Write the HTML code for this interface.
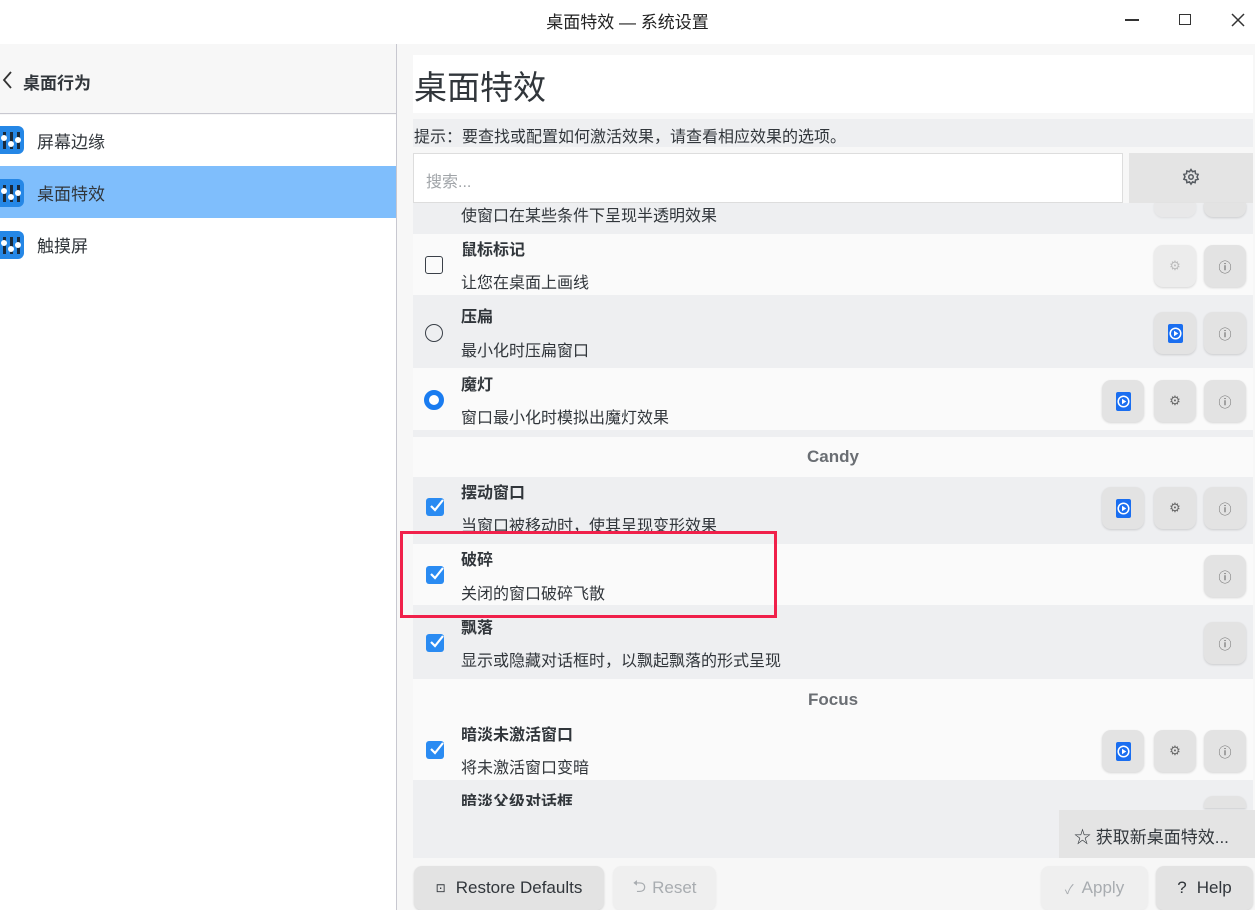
<!DOCTYPE html>
<html><head><meta charset="utf-8"><style>
*{margin:0;padding:0;box-sizing:border-box}
body{width:1255px;height:910px;overflow:hidden;background:#f7f7f7;font-family:"Liberation Sans","Noto Sans CJK SC",sans-serif;color:#31363b;position:relative}
.a{position:absolute}
.t{font-size:16px;font-weight:bold;color:#31363b;margin-top:-3px}
.d{font-size:16px;color:#31363b;margin-top:-3px}
.btn{position:absolute;width:42px;height:42px;border-radius:9px;background:#e3e3e3;box-shadow:0 1px 2px rgba(0,0,0,.15);display:flex;align-items:center;justify-content:center}
.cb{position:absolute;left:426px;width:18px;height:18px;border-radius:3px;background:#2a8bf2}
.hd{position:absolute;left:413px;width:840px;text-align:center;font-size:17px;font-weight:bold;color:#6a6e73}
.bb{position:absolute;top:866px;height:44px;border-radius:8px;font-size:17px;display:flex;align-items:center;justify-content:center;box-shadow:0 1px 2px rgba(0,0,0,.15)}
.pl{width:15px;height:19px;background:#1a6ef0;border-radius:2px;display:flex;align-items:center;justify-content:center}
.ic{position:absolute;left:0;width:24px;height:28px;border-radius:0 6px 6px 0;background:#2587e6}
</style></head><body>
<!-- title bar -->
<div class="a" style="left:0;top:0;width:1255px;height:44px;background:#fff"></div>
<div class="a" style="left:0;top:8px;width:1255px;text-align:center;font-size:17px;color:#222">桌面特效 — 系统设置</div>
<div class="a" style="left:1125px;top:19px;width:14px;height:1.5px;background:#333"></div>
<div class="a" style="left:1179px;top:14px;width:12px;height:11px;border:1.5px solid #333"></div>
<svg class="a" style="left:1231px;top:13px" width="14" height="14"><path d="M1 1L13 13M13 1L1 13" stroke="#333" stroke-width="1.5"/></svg>
<!-- sidebar -->
<div class="a" style="left:0;top:44px;width:396px;height:70px;background:#f7f7f7;border-bottom:1px solid #c8c8d0"></div>
<svg class="a" style="left:2px;top:71px" width="10" height="18"><path d="M9 1L2 9L9 17" stroke="#333" stroke-width="1.8" fill="none"/></svg>
<div class="a t" style="left:23px;top:72px;font-size:17px">桌面行为</div>
<div class="a" style="left:0;top:115px;width:396px;height:795px;background:#fff"></div>
<div class="a" style="left:0;top:166px;width:396px;height:52px;background:#7fbefc"></div>
<div class="a" style="left:396px;top:44px;width:1px;height:866px;background:#c8c8d0"></div>
<svg class="a" style="left:0;top:126px" width="24" height="28"><rect width="24" height="28" rx="6" fill="#2587e6"/><rect x="0" y="0" width="6" height="28" fill="#2587e6"/><rect x="3" y="6" width="3" height="17" fill="#1b2a3a"/><rect x="10" y="6" width="3" height="17" fill="#1b2a3a"/><rect x="17" y="6" width="3" height="17" fill="#1b2a3a"/><circle cx="4" cy="12" r="3" fill="#fff"/><circle cx="11" cy="18" r="3" fill="#fff"/><circle cx="18" cy="14" r="3" fill="#fff"/></svg>
<svg class="a" style="left:0;top:179px" width="24" height="28"><rect width="24" height="28" rx="6" fill="#2587e6"/><rect x="0" y="0" width="6" height="28" fill="#2587e6"/><rect x="3" y="6" width="3" height="17" fill="#1b2a3a"/><rect x="10" y="6" width="3" height="17" fill="#1b2a3a"/><rect x="17" y="6" width="3" height="17" fill="#1b2a3a"/><circle cx="4" cy="12" r="3" fill="#fff"/><circle cx="11" cy="18" r="3" fill="#fff"/><circle cx="18" cy="14" r="3" fill="#fff"/></svg>
<svg class="a" style="left:0;top:231px" width="24" height="28"><rect width="24" height="28" rx="6" fill="#2587e6"/><rect x="0" y="0" width="6" height="28" fill="#2587e6"/><rect x="3" y="6" width="3" height="17" fill="#1b2a3a"/><rect x="10" y="6" width="3" height="17" fill="#1b2a3a"/><rect x="17" y="6" width="3" height="17" fill="#1b2a3a"/><circle cx="4" cy="12" r="3" fill="#fff"/><circle cx="11" cy="18" r="3" fill="#fff"/><circle cx="18" cy="14" r="3" fill="#fff"/></svg>
<div class="a d" style="left:37px;top:131px;font-size:17px">屏幕边缘</div>
<div class="a d" style="left:37px;top:183px;font-size:17px">桌面特效</div>
<div class="a d" style="left:37px;top:235px;font-size:17px">触摸屏</div>
<!-- right -->
<div class="a" style="left:413px;top:55px;width:840px;height:58px;background:#fff"></div>
<div class="a" style="left:414px;top:61px;font-size:33px;color:#31363b">桌面特效</div>
<div class="a" style="left:413px;top:119px;width:840px;height:28px;background:#eeeff1"></div>
<div class="a" style="left:414px;top:123px;font-size:16px">提示：要查找或配置如何激活效果，请查看相应效果的选项。</div>
<div class="a" style="left:413px;top:153px;width:710px;height:50px;background:#fff;border:1px solid #ddd"></div>
<div class="a" style="left:426px;top:168px;font-size:16px;color:#a0a4a8">搜索...</div>
<div class="a" style="left:1129px;top:153px;width:124px;height:50px;background:#e4e4e4"></div>
<svg class="a" style="left:1182px;top:168px" width="18" height="18" viewBox="0 0 24 24"><path d="M12 2l2 3 3.5-1 .5 3.5 3.5 1-1.5 3.5 1.5 3-3.5 1-.5 3.5-3.5-1-2 3-2-3-3.5 1-.5-3.5-3.5-1 1.5-3.5L2.5 8.5 6 7.5 6.5 4 10 5z" fill="none" stroke="#555a60" stroke-width="2"/><circle cx="12" cy="12" r="3" fill="none" stroke="#555a60" stroke-width="2"/></svg>
<!-- list rows -->
<div class="a" style="left:413px;top:203px;width:840px;height:31px;background:#eeeff1"></div>
<div class="a" style="left:413px;top:234px;width:840px;height:61px;background:#fafafa"></div>
<div class="a" style="left:413px;top:295px;width:840px;height:73px;background:#eeeff1"></div>
<div class="a" style="left:413px;top:368px;width:840px;height:62px;background:#fafafa"></div>
<div class="a" style="left:413px;top:430px;width:840px;height:7px;background:#eeeff1"></div>
<div class="a" style="left:413px;top:437px;width:840px;height:40px;background:#fafafa"></div>
<div class="a" style="left:413px;top:477px;width:840px;height:67px;background:#eeeff1"></div>
<div class="a" style="left:413px;top:544px;width:840px;height:61px;background:#fafafa"></div>
<div class="a" style="left:413px;top:605px;width:840px;height:74px;background:#eeeff1"></div>
<div class="a" style="left:413px;top:679px;width:840px;height:101px;background:#fafafa"></div>
<div class="a" style="left:413px;top:780px;width:840px;height:78px;background:#eeeff1"></div>

<div class="btn" style="left:1154px;top:203px;height:14px;border-radius:0 0 9px 9px;opacity:.5"></div><div class="btn" style="left:1204px;top:203px;height:14px;border-radius:0 0 9px 9px"></div>
<div class="a d" style="left:461px;top:205px">使窗口在某些条件下呈现半透明效果</div>

<div class="a" style="left:425px;top:256px;width:18px;height:18px;border:1.6px solid #3a4048;border-radius:3px"></div>
<div class="a t" style="left:461px;top:239px">鼠标标记</div><div class="a d" style="left:461px;top:272px">让您在桌面上画线</div>
<div class="btn" style="left:1154px;top:245px;background:#ececec"><span style="color:#bbb;font-size:13px">⚙</span></div>
<div class="btn" style="left:1204px;top:245px"><span style="color:#555;font-size:13px">ⓘ</span></div>

<div class="a" style="left:425px;top:324px;width:18px;height:18px;border:1.6px solid #3a4048;border-radius:50%"></div>
<div class="a t" style="left:461px;top:306px">压扁</div><div class="a d" style="left:461px;top:340px">最小化时压扁窗口</div>

<div class="a" style="left:424px;top:390px;width:20px;height:20px;border:5px solid #1a7cf0;border-radius:50%;background:#fff"></div>
<div class="a t" style="left:461px;top:374px">魔灯</div><div class="a d" style="left:461px;top:407px">窗口最小化时模拟出魔灯效果</div>

<div class="hd" style="top:447px">Candy</div>
<div class="cb" style="top:498px"></div><div class="a t" style="left:461px;top:482px">摆动窗口</div><div class="a d" style="left:461px;top:515px">当窗口被移动时，使其呈现变形效果</div>
<div class="cb" style="top:566px"></div><div class="a t" style="left:461px;top:549px">破碎</div><div class="a d" style="left:461px;top:583px">关闭的窗口破碎飞散</div>
<div class="cb" style="top:634px"></div><div class="a t" style="left:461px;top:617px">飘落</div><div class="a d" style="left:461px;top:650px">显示或隐藏对话框时，以飘起飘落的形式呈现</div>
<div class="hd" style="top:690px">Focus</div>
<div class="cb" style="top:741px"></div><div class="a t" style="left:461px;top:724px">暗淡未激活窗口</div><div class="a d" style="left:461px;top:757px">将未激活窗口变暗</div>
<div class="a" style="left:413px;top:788px;width:840px;height:18px;overflow:hidden"><div class="a t" style="left:48px;top:3px">暗淡父级对话框</div></div>
<div class="btn" style="left:1204px;top:796px;height:12px;border-radius:9px 9px 0 0"></div>

<!-- checkmarks -->
<svg class="a" style="left:427px;top:496px" width="20" height="20"><path d="M4 10l4 4 8-10" stroke="#fff" stroke-width="2.2" fill="none"/></svg>
<svg class="a" style="left:427px;top:564px" width="20" height="20"><path d="M4 10l4 4 8-10" stroke="#fff" stroke-width="2.2" fill="none"/></svg>
<svg class="a" style="left:427px;top:632px" width="20" height="20"><path d="M4 10l4 4 8-10" stroke="#fff" stroke-width="2.2" fill="none"/></svg>
<svg class="a" style="left:427px;top:739px" width="20" height="20"><path d="M4 10l4 4 8-10" stroke="#fff" stroke-width="2.2" fill="none"/></svg>

<!-- buttons -->
<div class="btn" style="left:1154px;top:312px"><div class="pl"><svg width="13" height="13"><circle cx="6.5" cy="6.5" r="5.3" fill="none" stroke="#fff" stroke-width="1.5"/><path d="M5 3.8L9.3 6.5L5 9.2Z" fill="#fff"/></svg></div></div>
<div class="btn" style="left:1204px;top:312px"><span style="color:#555;font-size:13px">ⓘ</span></div>
<div class="btn" style="left:1102px;top:380px"><div class="pl"><svg width="13" height="13"><circle cx="6.5" cy="6.5" r="5.3" fill="none" stroke="#fff" stroke-width="1.5"/><path d="M5 3.8L9.3 6.5L5 9.2Z" fill="#fff"/></svg></div></div>
<div class="btn" style="left:1154px;top:380px"><span style="color:#666;font-size:13px">⚙</span></div>
<div class="btn" style="left:1204px;top:380px"><span style="color:#555;font-size:13px">ⓘ</span></div>
<div class="btn" style="left:1102px;top:487px"><div class="pl"><svg width="13" height="13"><circle cx="6.5" cy="6.5" r="5.3" fill="none" stroke="#fff" stroke-width="1.5"/><path d="M5 3.8L9.3 6.5L5 9.2Z" fill="#fff"/></svg></div></div>
<div class="btn" style="left:1154px;top:487px"><span style="color:#666;font-size:13px">⚙</span></div>
<div class="btn" style="left:1204px;top:487px"><span style="color:#555;font-size:13px">ⓘ</span></div>
<div class="btn" style="left:1204px;top:555px"><span style="color:#555;font-size:13px">ⓘ</span></div>
<div class="btn" style="left:1204px;top:622px"><span style="color:#555;font-size:13px">ⓘ</span></div>
<div class="btn" style="left:1102px;top:730px"><div class="pl"><svg width="13" height="13"><circle cx="6.5" cy="6.5" r="5.3" fill="none" stroke="#fff" stroke-width="1.5"/><path d="M5 3.8L9.3 6.5L5 9.2Z" fill="#fff"/></svg></div></div>
<div class="btn" style="left:1154px;top:730px"><span style="color:#666;font-size:13px">⚙</span></div>
<div class="btn" style="left:1204px;top:730px"><span style="color:#555;font-size:13px">ⓘ</span></div>

<!-- red highlight -->
<div class="a" style="left:400px;top:531px;width:377px;height:87px;border:3px solid #f0204a"></div>

<!-- get new -->
<div class="a" style="left:1059px;top:810px;width:196px;height:48px;background:#e4e4e4"></div>
<div class="a d" style="left:1074px;top:826px;font-size:17px">☆ 获取新桌面特效...</div>

<!-- bottom buttons -->
<div class="bb" style="left:414px;width:190px;background:#e3e3e3;color:#31363b"><span style="font-size:12px;margin-right:10px">⊡</span>Restore Defaults</div>
<div class="bb" style="left:613px;width:103px;background:#efefef;color:#a8acb0;box-shadow:0 1px 2px rgba(0,0,0,.06)"><span style="margin-right:6px">⮌</span>Reset</div>
<div class="bb" style="left:1041px;width:107px;background:#efefef;color:#a8acb0;box-shadow:0 1px 2px rgba(0,0,0,.06)"><span style="font-size:13px;margin-right:8px">✓</span>Apply</div>
<div class="bb" style="left:1156px;width:97px;background:#e3e3e3;color:#31363b"><span style="margin-right:10px">?</span>Help</div>
</body></html>
